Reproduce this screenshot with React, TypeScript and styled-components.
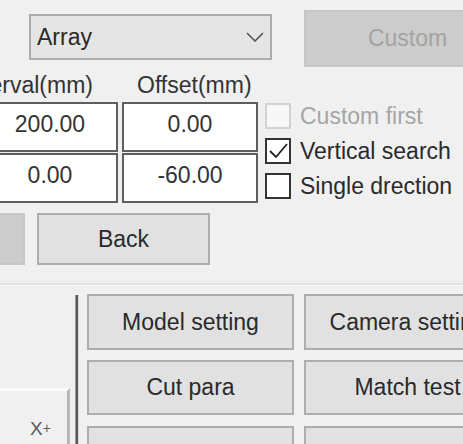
import React from 'react';
import styled, { createGlobalStyle } from 'styled-components';

const Global = createGlobalStyle`
  html, body { margin: 0; padding: 0; background: #f0f0f0; }
  body { font-family: 'Liberation Sans', Arial, sans-serif; }
`;

const Screen = styled.div`
  width: 463px;
  height: 444px;
  overflow: hidden;
  background: #f0f0f0;
  font-family: 'Liberation Sans', Arial, sans-serif;
  font-size: 23px;
  color: #2a2a2a;
`;

const TopPanel = styled.div`
  box-sizing: border-box;
  height: 283px;
  padding-top: 10px;
`;

const TopRow = styled.div`
  display: flex;
  align-items: flex-start;
`;

const Combo = styled.div`
  box-sizing: border-box;
  flex: none;
  margin-left: 29px;
  margin-top: 4px;
  width: 243px;
  height: 46px;
  border: 2px solid #adadad;
  background: #e5e5e5;
  display: flex;
  align-items: center;
  justify-content: space-between;
  padding: 0 6px 0 6px;
`;

const Btn = styled.div<{ $disabled?: boolean; $w?: number; $h?: number }>`
  box-sizing: border-box;
  flex: none;
  width: ${p => p.$w ?? 207}px;
  height: ${p => p.$h ?? 56}px;
  border: 2px solid ${p => (p.$disabled ? '#c6c6c6' : '#adadad')};
  background: ${p => (p.$disabled ? '#cccccc' : '#e1e1e1')};
  color: ${p => (p.$disabled ? '#a3a3a3' : '#2a2a2a')};
  display: flex;
  align-items: center;
  justify-content: center;
  white-space: nowrap;
`;

const CustomBtn = styled(Btn)`
  margin-left: 32px;
`;

const FormGrid = styled.div`
  display: grid;
  grid-template-columns: 136px 136px 1fr;
  grid-template-rows: 31px 50px 50px;
  column-gap: 4px;
  row-gap: 1px;
  margin-left: -18px;
  margin-top: 3px;
`;

const ColLabel = styled.div<{ $align: 'left' | 'right'; $pad: number }>`
  display: flex;
  align-items: center;
  justify-content: ${p => (p.$align === 'right' ? 'flex-end' : 'flex-start')};
  padding: ${p => (p.$align === 'right' ? `0 ${p.$pad}px 0 0` : `0 0 0 ${p.$pad}px`)};
  white-space: nowrap;
  color: #333;
`;

const NumBox = styled.div`
  box-sizing: border-box;
  border: 2px solid #5e5e5e;
  background: #ffffff;
  display: flex;
  align-items: center;
  justify-content: center;
  padding-bottom: 6px;
  color: #333;
`;

const CheckCol = styled.div`
  grid-column: 3;
  grid-row: 2 / span 2;
  display: flex;
  flex-direction: column;
  gap: 9px;
  padding-left: 3px;
  padding-top: 1px;
`;

const CheckRow = styled.div<{ $disabled?: boolean }>`
  display: flex;
  align-items: center;
  gap: 9px;
  height: 26px;
  white-space: nowrap;
  color: ${p => (p.$disabled ? '#a5a5a5' : '#2a2a2a')};
`;

const Box = styled.div<{ $disabled?: boolean }>`
  box-sizing: border-box;
  flex: none;
  width: 26px;
  height: 26px;
  border: 2px solid ${p => (p.$disabled ? '#d2d2d2' : '#333')};
  background: ${p => (p.$disabled ? '#f7f7f7' : '#fff')};
  display: flex;
  align-items: center;
  justify-content: center;
`;

const ButtonRow = styled.div`
  display: flex;
  gap: 12px;
  margin-top: 10px;
`;

const GrayBtn = styled(Btn)`
  margin-left: -148px;
`;

const Divider = styled.div`
  height: 2px;
  background: #e2e2e2;
  border-bottom: 1px solid #f8f8f8;
`;

const BottomArea = styled.div`
  display: flex;
  align-items: stretch;
  padding-top: 8px;
`;

const LeftPane = styled.div`
  box-sizing: border-box;
  flex: none;
  width: 70px;
  margin-top: 94px;
  border-top: 3px solid #fbfbfb;
  border-right: 3px solid #b7b7b7;
  padding: 27px 0 0 30px;
  color: #5a5a5a;
  font-size: 19px;
`;

const Plus = styled.span`
  font-size: 14px;
  vertical-align: 2px;
`;

const Splitter = styled.div`
  flex: none;
  width: 4px;
  margin-left: 5px;
  margin-top: 1px;
  background: linear-gradient(to right, #9a9a9a 0 1px, #5a5a5a 1px 3px, #d8d8d8 3px 4px);
`;

const ButtonGrid = styled.div`
  display: grid;
  grid-template-columns: 207px 207px;
  grid-auto-rows: 56px;
  column-gap: 10px;
  row-gap: 10px;
  margin-left: 8px;
`;

const Chevron = () => (
  <svg width="18" height="10" viewBox="0 0 18 10">
    <polyline points="1,1 9,9 17,1" fill="none" stroke="#555" strokeWidth="1.6" />
  </svg>
);

const Tick = () => (
  <svg width="20" height="18" viewBox="0 0 20 18">
    <polyline points="2,9 8,15 19,2" fill="none" stroke="#222" strokeWidth="1.8" />
  </svg>
);

export default function App() {
  return (
    <Screen>
      <Global />
      <TopPanel>
        <TopRow>
          <Combo>
            <span>Array</span>
            <Chevron />
          </Combo>
          <CustomBtn $disabled $w={207} $h={57}>Custom</CustomBtn>
        </TopRow>
        <FormGrid>
          <ColLabel $align="right" $pad={25}>Interval(mm)</ColLabel>
          <ColLabel $align="left" $pad={15}>Offset(mm)</ColLabel>
          <div />
          <NumBox>200.00</NumBox>
          <NumBox>0.00</NumBox>
          <NumBox>0.00</NumBox>
          <NumBox>-60.00</NumBox>
          <CheckCol>
            <CheckRow $disabled>
              <Box $disabled />
              Custom first
            </CheckRow>
            <CheckRow>
              <Box><Tick /></Box>
              Vertical search
            </CheckRow>
            <CheckRow>
              <Box />
              Single drection
            </CheckRow>
          </CheckCol>
        </FormGrid>
        <ButtonRow>
          <GrayBtn $disabled $w={173} $h={52} />
          <Btn $w={173} $h={52}>Back</Btn>
        </ButtonRow>
      </TopPanel>
      <Divider />
      <BottomArea>
        <LeftPane>
          X<Plus>+</Plus>
        </LeftPane>
        <Splitter />
        <ButtonGrid>
          <Btn>Model setting</Btn>
          <Btn>Camera setting</Btn>
          <Btn $h={55}>Cut para</Btn>
          <Btn $h={55}>Match test</Btn>
          <Btn>Cut test</Btn>
          <Btn>Simulation</Btn>
        </ButtonGrid>
      </BottomArea>
    </Screen>
  );
}
